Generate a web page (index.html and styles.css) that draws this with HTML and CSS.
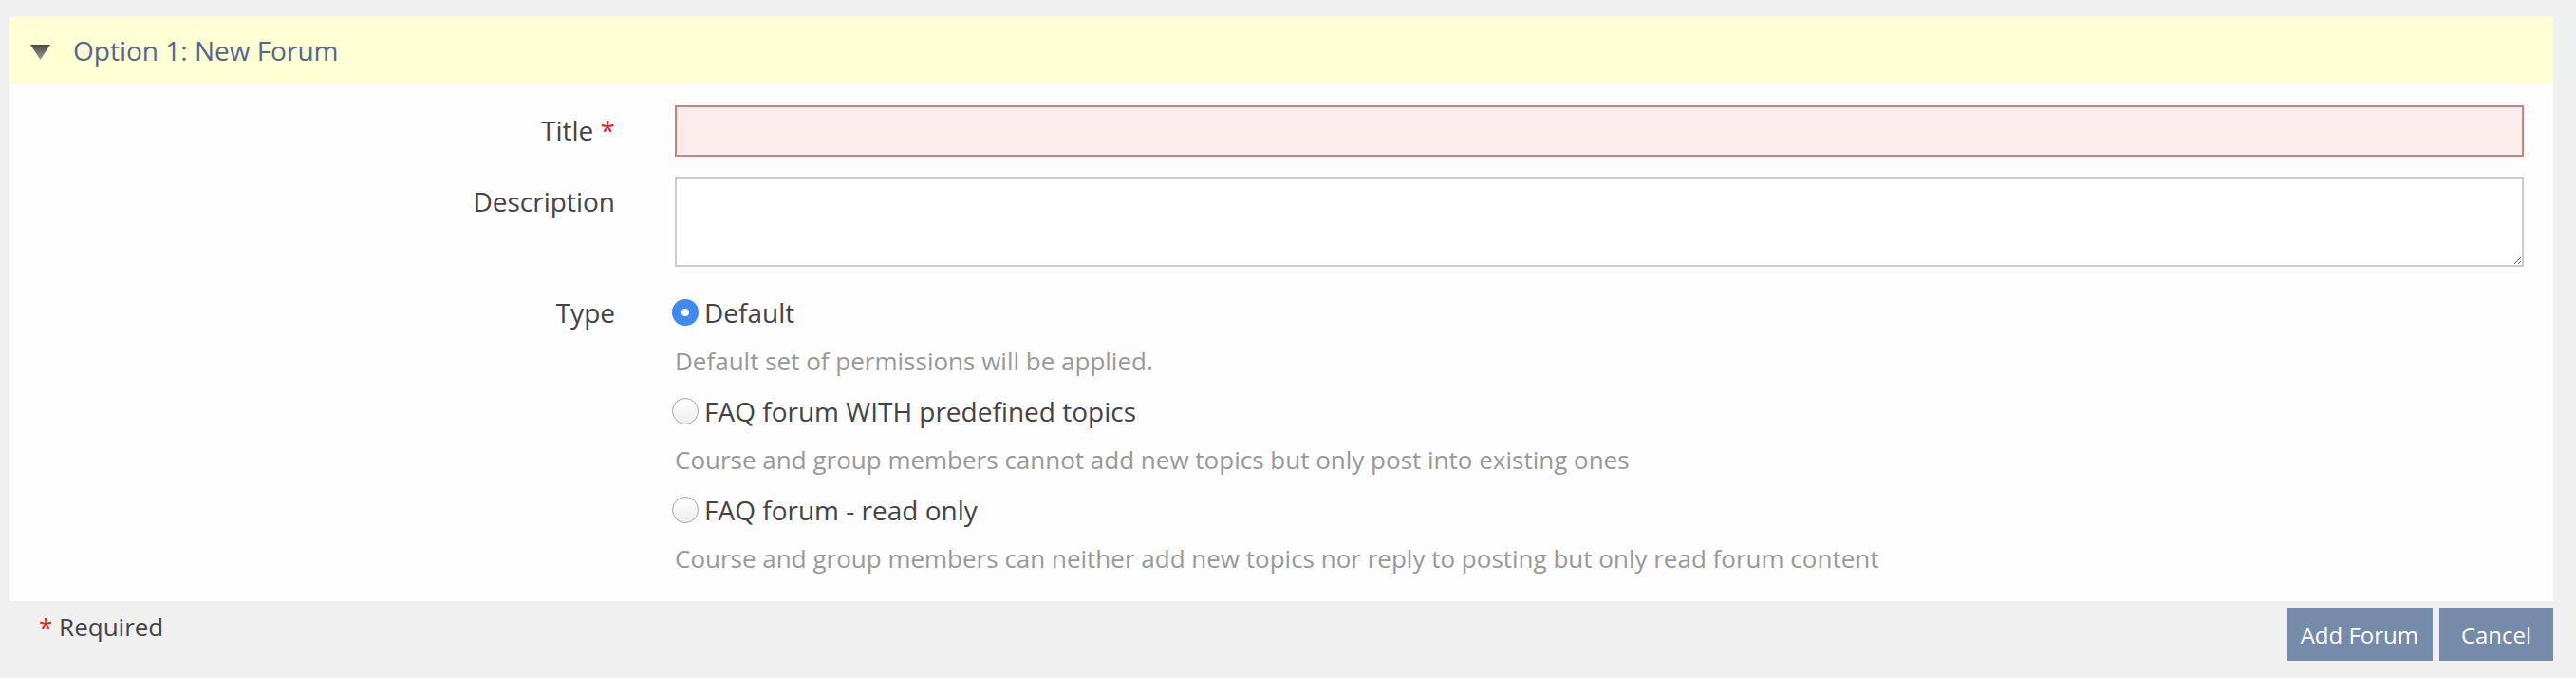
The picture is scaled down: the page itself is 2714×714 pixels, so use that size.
FILE: index.html
```html
<!DOCTYPE html>
<html lang="en">
<head>
<meta charset="utf-8">
<title>New Forum</title>
<link rel="stylesheet" href="styles.css">
</head>
<body>
<div class="panel">
  <div class="panel-head">
    <svg class="caret" width="21" height="16" viewBox="0 0 21 16" aria-hidden="true">
      <defs>
        <linearGradient id="cg" x1="0" y1="0" x2="0" y2="1">
          <stop offset="0" stop-color="#4a4a4a"/>
          <stop offset="1" stop-color="#9a9a9a"/>
        </linearGradient>
      </defs>
      <polygon points="0,0 21,0 10.5,16" fill="url(#cg)"/>
    </svg>
    <span class="panel-title">Option 1: New Forum</span>
  </div>
  <form class="form">
    <div class="row row-title">
      <label class="lbl" for="title">Title <span class="req">*</span></label>
      <div class="field"><input id="title" class="input input-error" type="text"></div>
    </div>
    <div class="row row-desc">
      <label class="lbl" for="desc">Description</label>
      <div class="field"><textarea id="desc" class="input textarea"></textarea></div>
    </div>
    <div class="row">
      <div class="lbl">Type</div>
      <div class="field options">
        <label class="opt"><input class="radio" type="radio" name="type" checked>Default</label>
        <div class="hint">Default set of permissions will be applied.</div>
        <label class="opt"><input class="radio" type="radio" name="type">FAQ forum WITH predefined topics</label>
        <div class="hint">Course and group members cannot add new topics but only post into existing ones</div>
        <label class="opt"><input class="radio" type="radio" name="type">FAQ forum - read only</label>
        <div class="hint">Course and group members can neither add new topics nor reply to posting but only read forum content</div>
      </div>
    </div>
  </form>
</div>
<div class="footer">
  <div class="required-note"><span class="req">*</span> Required</div>
  <div class="actions">
    <button class="btn" type="button">Add Forum</button>
    <button class="btn btn-cancel" type="button">Cancel</button>
  </div>
</div>
</body>
</html>
```
FILE: styles.css
```css
html, body {
  margin: 0;
  padding: 0;
}
body {
  background: #f0f0f0;
  font-family: "Open Sans", "DejaVu Sans", sans-serif;
  color: #444;
  font-size: 28px;
}
.panel {
  margin: 18px 24px 0 10px;
  background: #fdfdfd;
}
.panel-head {
  height: 70px;
  background: #ffffd4;
  display: flex;
  align-items: center;
  padding-left: 22px;
}
.caret {
  display: block;
  margin-right: 24px;
  margin-top: 3px;
}
.panel-title {
  color: #52688f;
  font-size: 28px;
  line-height: 70px;
}
.form {
  padding: 23px 31px 27px 0;
}
.row {
  display: flex;
  gap: 63px;
}
.row-title {
  margin-bottom: 21px;
}
.row-desc {
  margin-bottom: 28px;
}
.lbl {
  width: 638px;
  flex: none;
  text-align: right;
  line-height: 40px;
  padding-top: 6px;
  color: #444;
}
.row:last-child .lbl {
  padding-top: 0;
}
.req {
  color: #e8231d;
}
.field {
  flex: 1;
  min-width: 0;
}
.input {
  display: block;
  width: 100%;
  box-sizing: border-box;
  height: 54px;
  border: 2px solid #cccccc;
  background: #ffffff;
  margin: 0;
  font: inherit;
}
.input-error {
  border-color: #c98282;
  background: #fcecec;
}
.textarea {
  height: 95px;
  resize: vertical;
}
.options {
  display: flex;
  flex-direction: column;
  gap: 15px;
}
.opt {
  display: flex;
  align-items: center;
  line-height: 40px;
  color: #444;
}
.radio {
  appearance: none;
  -webkit-appearance: none;
  width: 28px;
  height: 28px;
  margin: 0 6px 0 -3px;
  border-radius: 50%;
  box-sizing: border-box;
  border: 1.5px solid #a8a8a8;
  background: linear-gradient(#ffffff, #eeeeee);
  flex: none;
  position: relative;
}
.radio:checked {
  border: none;
  background: #3d8bf0;
}
.radio:checked::after {
  content: "";
  position: absolute;
  left: 10px;
  top: 10px;
  width: 8px;
  height: 8px;
  border-radius: 50%;
  background: #ffffff;
}
.hint {
  font-size: 26px;
  line-height: 34px;
  color: #999999;
  margin-top: -1px;
  margin-bottom: 1px;
}
.footer {
  margin: 0 24px 0 10px;
  display: flex;
  justify-content: space-between;
  align-items: flex-start;
}
.required-note {
  padding: 7px 0 0 31px;
  line-height: 40px;
  font-size: 26px;
  color: #444;
}
.actions {
  display: flex;
  gap: 7px;
  margin-top: 7px;
}
.btn {
  height: 56px;
  border: none;
  background: #768ba9;
  color: #ffffff;
  font-family: "Open Sans", "DejaVu Sans", sans-serif;
  font-size: 24px;
  padding: 0 15px;
  min-width: 120px;
  cursor: pointer;
}
```
